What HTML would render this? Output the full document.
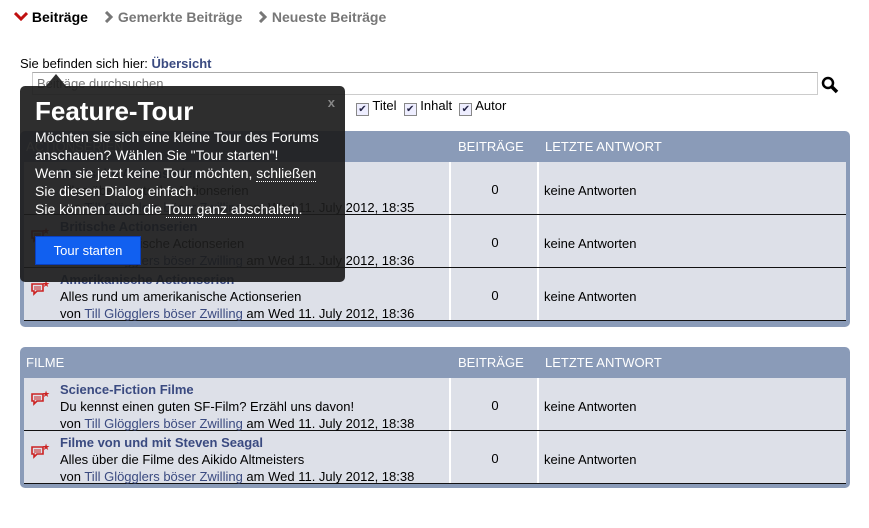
<!DOCTYPE html>
<html><head><meta charset="utf-8"><style>
*{margin:0;padding:0;box-sizing:border-box}
body{width:869px;height:528px;background:#fff;font-family:"Liberation Sans",Arial,sans-serif;font-size:13px;color:#000;position:relative;overflow:hidden}
.abs{position:absolute}
.nav{top:9px;font-size:14px;font-weight:bold;color:#777}
a{color:#3a4a80;text-decoration:none}
.panel{position:absolute;left:20px;width:830px;background:#8a9bb8;border-radius:5px}
.hd{height:31px;color:#fff;font-size:13px;position:relative}
.hd span{position:absolute;top:8px}
.row{position:relative;margin:0 4px;height:53px;background:#dde0e8;border-bottom:1px solid #111}
.row .c1{position:absolute;left:0;top:0;width:427px;height:52px;border-right:2px solid #fff}
.row .c2{position:absolute;left:429px;top:0;width:86px;height:52px;border-right:2px solid #fff;text-align:center;padding-top:20px}
.row .c3{position:absolute;left:520px;top:21px}
.t{position:absolute;left:36px;top:3px;line-height:17px}
.t b a{color:#3a4a80;font-size:13px}
.ic{position:absolute;left:6px;top:11px}
.tour{position:absolute;left:20px;top:86px;width:325px;height:196px;background:rgba(28,28,28,.92);border-radius:5px;color:#fff}
.cb{display:inline-block;width:13px;height:13px;border:1px solid #888;background:#eef;vertical-align:-2px;font-size:10px;line-height:11px;text-align:center;color:#224}
</style></head><body>
<div class="abs nav" style="left:14px;color:#000"><svg width="14" height="10" viewBox="0 0 14 10" style="vertical-align:1px"><path d="M1 2l6 6 6-6" stroke="#c01010" stroke-width="3" fill="none"/></svg> Beiträge</div>
<div class="abs nav" style="left:104px"><svg width="10" height="12" viewBox="0 0 10 12" style="vertical-align:-1px"><path d="M2 1l5 5-5 5" stroke="#777" stroke-width="3" fill="none"/></svg> Gemerkte Beiträge</div>
<div class="abs nav" style="left:258px"><svg width="10" height="12" viewBox="0 0 10 12" style="vertical-align:-1px"><path d="M2 1l5 5-5 5" stroke="#777" stroke-width="3" fill="none"/></svg> Neueste Beiträge</div>
<div class="abs" style="left:20px;top:56px">Sie befinden sich hier: <b><a>Übersicht</a></b></div>
<div class="abs" style="left:32px;top:72px;width:786px;height:23px;border:1px solid #ccc;border-top-color:#aaa;padding:3px 4px;color:#777">Beiträge durchsuchen</div>
<svg class="abs" style="left:821px;top:76px" width="18" height="18" viewBox="0 0 18 18"><circle cx="7" cy="7" r="5" stroke="#000" stroke-width="2.5" fill="none"/><path d="M10.5 10.5l5.5 5.5" stroke="#000" stroke-width="3.5"/></svg>
<div class="abs" style="left:356px;top:98px">
<span class="cb">✔</span> Titel&nbsp;
<span class="cb">✔</span> Inhalt&nbsp;
<span class="cb">✔</span> Autor</div>

<div class="panel" style="top:131px;height:196px">
<div class="hd"><span style="left:6px">ACTIONSERIEN</span><span style="left:438px">BEITRÄGE</span><span style="left:525px">LETZTE ANTWORT</span></div>
<div class="row"><div class="c1"><div class="t"><b><a>Deutsche Actionserien</a></b><br>Alles über deutsche Actionserien<br>von <a>Till Glögglers böser Zwilling</a> am Wed 11. July 2012, 18:35</div></div><div class="c2">0</div><div class="c3">keine Antworten</div></div>
<div class="row"><div class="c1"><svg class="ic" width="20" height="18" viewBox="0 0 20 18"><path d="M2 5h11v7H7l-3 3v-3H2z" stroke="#c22" stroke-width="1.6" fill="none"/><path d="M4 8h7M4 10h7" stroke="#c22"/><text x="12" y="8" font-size="9" fill="#c22">★</text></svg><div class="t"><b><a>Britische Actionserien</a></b><br>Alles über britische Actionserien<br>von <a>Till Glögglers böser Zwilling</a> am Wed 11. July 2012, 18:36</div></div><div class="c2">0</div><div class="c3">keine Antworten</div></div>
<div class="row"><div class="c1"><svg class="ic" width="20" height="18" viewBox="0 0 20 18"><path d="M2 5h11v7H7l-3 3v-3H2z" stroke="#c22" stroke-width="1.6" fill="none"/><path d="M4 8h7M4 10h7" stroke="#c22"/><text x="12" y="8" font-size="9" fill="#c22">★</text></svg><div class="t"><b><a>Amerikanische Actionserien</a></b><br>Alles rund um amerikanische Actionserien<br>von <a>Till Glögglers böser Zwilling</a> am Wed 11. July 2012, 18:36</div></div><div class="c2">0</div><div class="c3">keine Antworten</div></div>
</div>

<div class="panel" style="top:347px;height:141px">
<div class="hd"><span style="left:6px">FILME</span><span style="left:438px">BEITRÄGE</span><span style="left:525px">LETZTE ANTWORT</span></div>
<div class="row"><div class="c1"><svg class="ic" width="20" height="18" viewBox="0 0 20 18"><path d="M2 5h11v7H7l-3 3v-3H2z" stroke="#c22" stroke-width="1.6" fill="none"/><path d="M4 8h7M4 10h7" stroke="#c22"/><text x="12" y="8" font-size="9" fill="#c22">★</text></svg><div class="t"><b><a>Science-Fiction Filme</a></b><br>Du kennst einen guten SF-Film? Erzähl uns davon!<br>von <a>Till Glögglers böser Zwilling</a> am Wed 11. July 2012, 18:38</div></div><div class="c2">0</div><div class="c3">keine Antworten</div></div>
<div class="row"><div class="c1"><svg class="ic" width="20" height="18" viewBox="0 0 20 18"><path d="M2 5h11v7H7l-3 3v-3H2z" stroke="#c22" stroke-width="1.6" fill="none"/><path d="M4 8h7M4 10h7" stroke="#c22"/><text x="12" y="8" font-size="9" fill="#c22">★</text></svg><div class="t"><b><a>Filme von und mit Steven Seagal</a></b><br>Alles über die Filme des Aikido Altmeisters<br>von <a>Till Glögglers böser Zwilling</a> am Wed 11. July 2012, 18:38</div></div><div class="c2">0</div><div class="c3">keine Antworten</div></div>
</div>

<div class="abs" style="left:46px;top:74px;width:0;height:0;border-left:10px solid transparent;border-right:10px solid transparent;border-bottom:12px solid rgba(28,28,28,.92)"></div>
<div class="tour">
<div style="position:absolute;left:15px;top:10px;font-size:26px;font-weight:bold">Feature-Tour</div>
<div style="position:absolute;right:10px;top:9px;font-size:13px;font-weight:bold;color:#888">x</div>
<div style="position:absolute;left:15px;top:42px;font-size:14px;line-height:18px">Möchten sie sich eine kleine Tour des Forums<br>anschauen? Wählen Sie "Tour starten"!<br>Wenn sie jetzt keine Tour möchten, <span style="border-bottom:1px dotted #fff">schließen</span><br>Sie diesen Dialog einfach.<br>Sie können auch die <span style="border-bottom:1px dotted #fff">Tour ganz abschalten</span>.</div>
<div style="position:absolute;left:15px;top:150px;width:106px;height:29px;background:#1160f0;border:1px solid #0a40c0;color:#fff;font-size:13px;text-align:center;line-height:27px">Tour starten</div>
</div>
</body></html>
